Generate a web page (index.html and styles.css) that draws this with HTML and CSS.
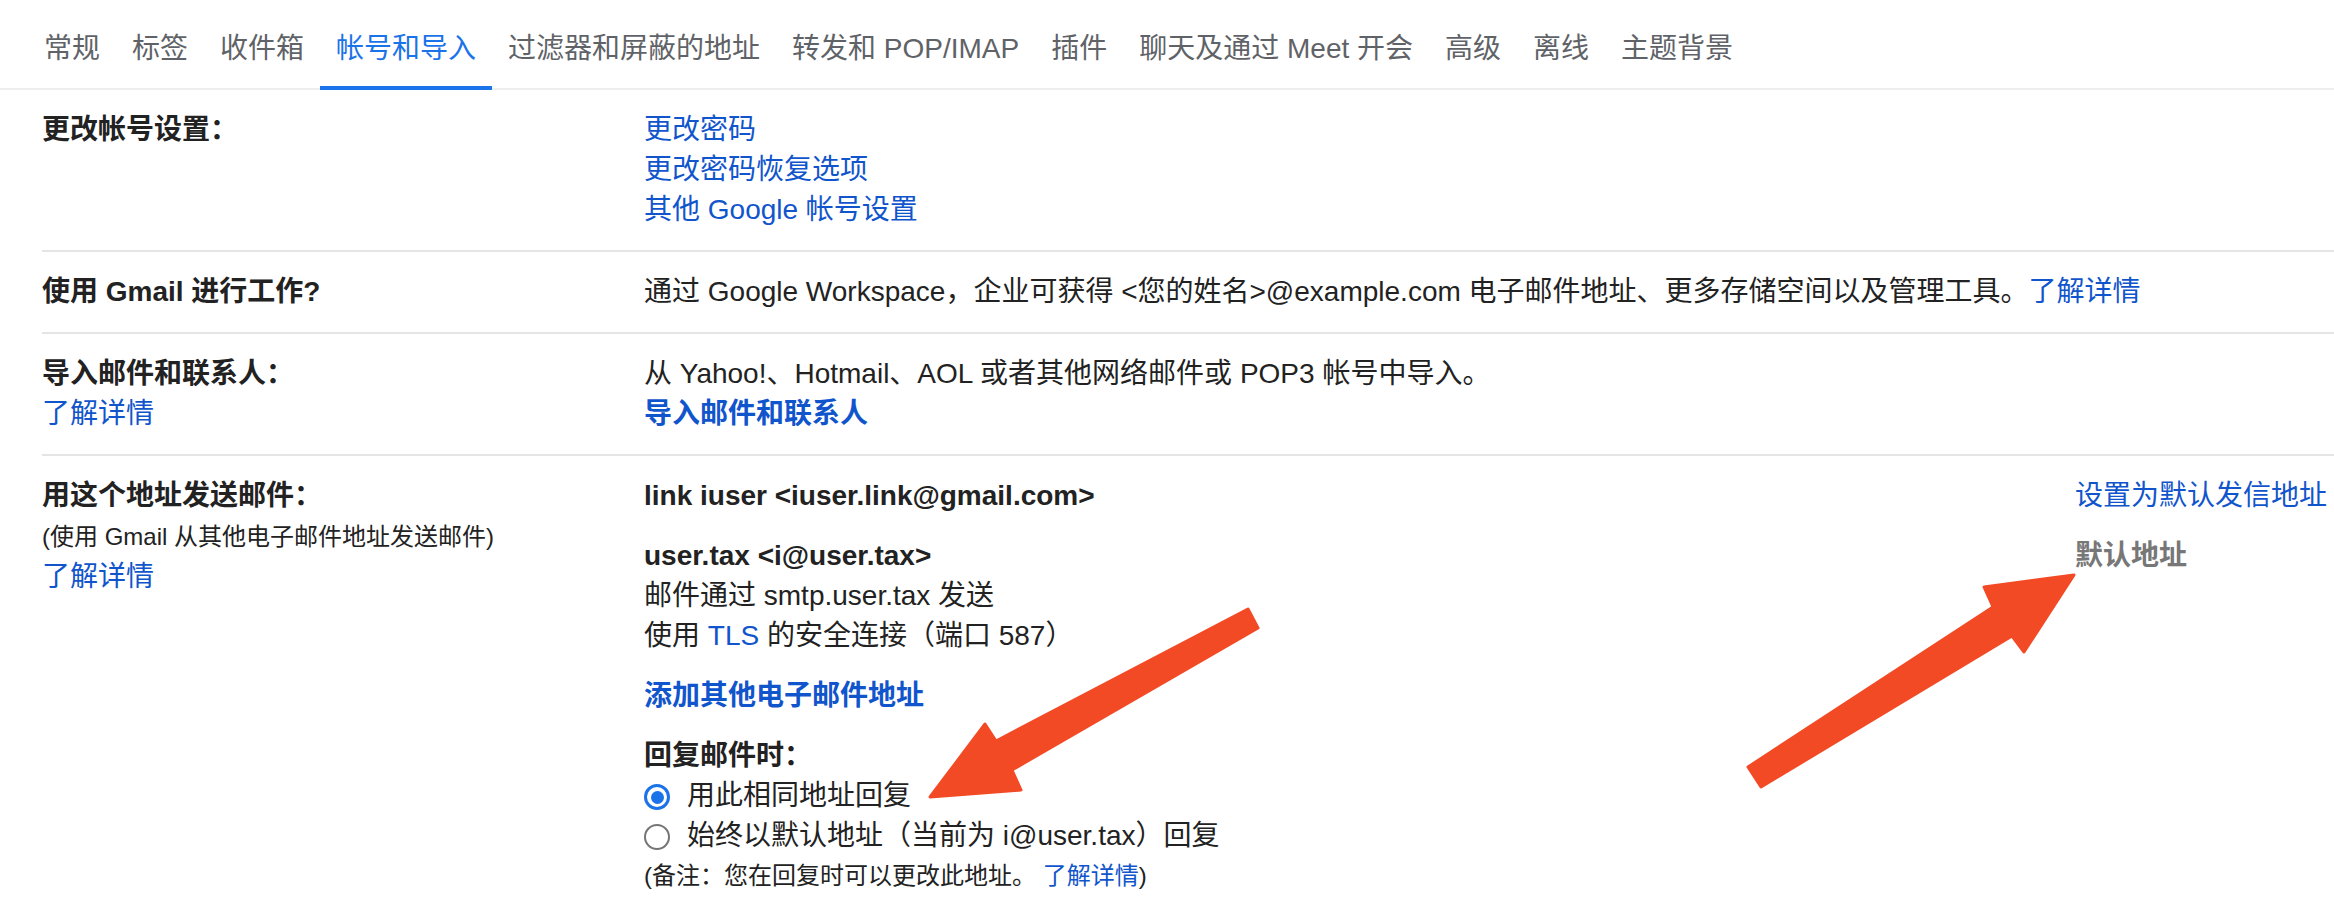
FILE: index.html
```html
<!DOCTYPE html>
<html lang="zh-CN">
<head>
<meta charset="utf-8">
<title>设置 - 帐号和导入</title>
<link rel="stylesheet" href="styles.css">
</head>
<body>
<nav class="tabs">
  <a class="tab">常规</a>
  <a class="tab">标签</a>
  <a class="tab">收件箱</a>
  <a class="tab active">帐号和导入</a>
  <a class="tab">过滤器和屏蔽的地址</a>
  <a class="tab">转发和 POP/IMAP</a>
  <a class="tab">插件</a>
  <a class="tab">聊天及通过 Meet 开会</a>
  <a class="tab">高级</a>
  <a class="tab">离线</a>
  <a class="tab">主题背景</a>
</nav>
<main class="settings">
  <section class="row">
    <div class="label"><div class="title">更改帐号设置：</div></div>
    <div class="value">
      <a class="link block">更改密码</a>
      <a class="link block">更改密码恢复选项</a>
      <a class="link block">其他 Google 帐号设置</a>
    </div>
  </section>
  <section class="row">
    <div class="label"><div class="title">使用 Gmail 进行工作?</div></div>
    <div class="value">通过 Google Workspace，企业可获得 &lt;您的姓名&gt;@example.com 电子邮件地址、更多存储空间以及管理工具。<a class="link">了解详情</a></div>
  </section>
  <section class="row">
    <div class="label">
      <div class="title">导入邮件和联系人：</div>
      <a class="link block">了解详情</a>
    </div>
    <div class="value">
      <div>从 Yahoo!、Hotmail、AOL 或者其他网络邮件或 POP3 帐号中导入。</div>
      <a class="link block strong">导入邮件和联系人</a>
    </div>
  </section>
  <section class="row last">
    <div class="label">
      <div class="title">用这个地址发送邮件：</div>
      <div class="sub">(使用 Gmail 从其他电子邮件地址发送邮件)</div>
      <a class="link block">了解详情</a>
    </div>
    <div class="value">
      <div class="senders">
        <div class="sender">
          <div class="strong">link iuser &lt;iuser.link@gmail.com&gt;</div>
        </div>
        <div class="action"><a class="link">设置为默认发信地址</a></div>
        <div class="sender">
          <div class="strong">user.tax &lt;i@user.tax&gt;</div>
          <div>邮件通过 smtp.user.tax 发送</div>
          <div>使用 <a class="link">TLS</a> 的安全连接（端口 587）</div>
        </div>
        <div class="action"><span class="default-tag">默认地址</span></div>
      </div>
      <a class="link block strong add">添加其他电子邮件地址</a>
      <div class="reply-title">回复邮件时：</div>
      <label class="radio-row"><span class="radio checked"></span><span>用此相同地址回复</span></label>
      <label class="radio-row"><span class="radio"></span><span>始终以默认地址（当前为 i@user.tax）回复</span></label>
      <div class="note">(备注：您在回复时可以更改此地址。 <a class="link">了解详情</a>)</div>
    </div>
  </section>
</main>
<svg class="arrows" width="2334" height="898" viewBox="0 0 2334 898" aria-hidden="true">
  <polygon points="1248,609 1258,628 1012,770 1021,790 930,797 985,724 996,741" fill="#f34a26" stroke="#f34a26" stroke-width="3" stroke-linejoin="round"/>
  <polygon points="1748,767 1993,607 1984,587 2074,575 2024,652 2012,636 1761,787" fill="#f34a26" stroke="#f34a26" stroke-width="3" stroke-linejoin="round"/>
</svg>
</body>
</html>
```

FILE: styles.css
```css
* {
  box-sizing: border-box;
}

html,
body {
  margin: 0;
  padding: 0;
  background: #ffffff;
}

body {
  position: relative;
  width: 2334px;
  height: 898px;
  overflow: hidden;
  font-family: "Liberation Sans", "Noto Sans CJK SC", sans-serif;
  font-size: 28px;
  line-height: 40px;
  color: #222222;
}

a {
  color: #1155cc;
  text-decoration: none;
  cursor: pointer;
}

.tabs {
  display: flex;
  padding-left: 28px;
  border-bottom: 2px solid #eeeeee;
}

.tab {
  display: flex;
  align-items: center;
  height: 90px;
  margin-bottom: -2px;
  padding: 12px 16px 0;
  border-bottom: 4px solid transparent;
  color: #5f6368;
  white-space: nowrap;
}

.tab.active {
  color: #1a73e8;
  border-bottom-color: #1a73e8;
}

.settings {
  padding-left: 42px;
}

.row {
  display: grid;
  grid-template-columns: 602px 1fr;
  padding: 20px 0;
  border-bottom: 2px solid #e5e5e5;
}

.row.last {
  border-bottom: none;
}

.title {
  font-weight: bold;
}

.value {
  padding-right: 7px;
  white-space: nowrap;
}

.block {
  display: block;
}

.strong {
  font-weight: bold;
}

.sub {
  font-size: 24px;
  line-height: 41px;
}

.senders {
  display: grid;
  grid-template-columns: 1fr auto;
  row-gap: 20px;
}

.default-tag {
  color: #777777;
  font-weight: bold;
}

.add {
  margin-top: 20px;
}

.reply-title {
  margin-top: 20px;
  font-weight: bold;
}

.radio-row {
  display: flex;
  align-items: center;
}

.radio {
  display: flex;
  align-items: center;
  justify-content: center;
  flex: none;
  width: 26px;
  height: 26px;
  margin: 2px 17px 0 0;
  border: 2px solid #757575;
  border-radius: 50%;
}

.radio.checked {
  border: 3px solid #1a73e8;
}

.radio.checked::after {
  content: "";
  width: 13px;
  height: 13px;
  border-radius: 50%;
  background: #1a73e8;
}

.note {
  font-size: 24px;
}

.arrows {
  position: absolute;
  left: 0;
  top: 0;
  pointer-events: none;
}
```
